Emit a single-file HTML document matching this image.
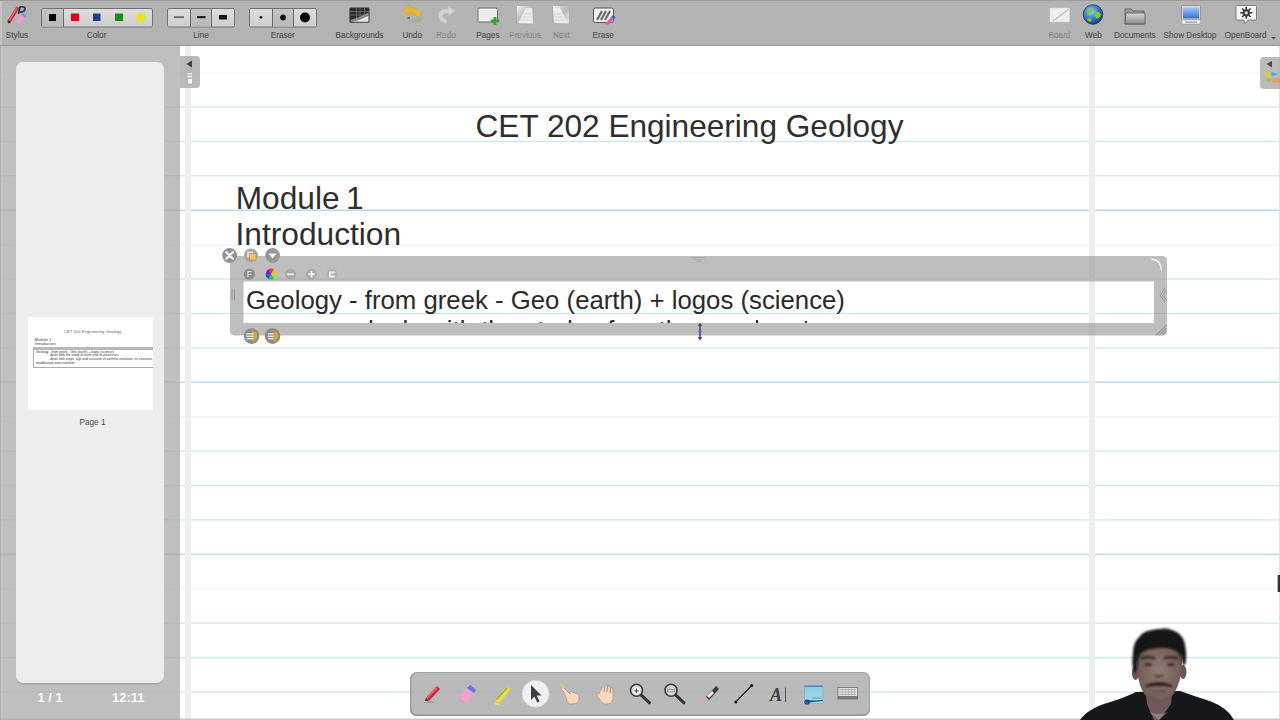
<!DOCTYPE html>
<html><head><meta charset="utf-8">
<style>
html,body{margin:0;padding:0;}
body{width:1280px;height:720px;overflow:hidden;position:relative;background:#fff;font-family:"Liberation Sans",sans-serif;}
.abs{position:absolute;}
#toolbar{left:0;top:0;width:1280px;height:44px;background:#b3b3b3;border-top:1px solid #9d9d9d;border-bottom:1px solid #9a9a9a;box-shadow:inset 0 -1px 0 #adadad;}
.lbl{position:absolute;top:30px;font-size:8.2px;line-height:10px;color:#4a4a4a;-webkit-text-stroke:0.1px #5a5a5a;white-space:nowrap;transform:translateX(-50%);}
.lbl.dis{color:#989898;}
.t1{font-size:32px;line-height:36px;color:#2e2e2e;white-space:nowrap;}

</style></head><body>
<svg class="abs" style="left:0;top:0" width="1280" height="720">
<g fill="#c8e2ee"><rect x="0" y="106.35" width="1280" height="1.3" fill="#cce7f0"/><rect x="0" y="140.76" width="1280" height="1.3" fill="#cce7f0"/><rect x="0" y="175.17" width="1280" height="1.3" fill="#cce7f0"/><rect x="0" y="209.48" width="1280" height="1.5" fill="#bad8ee"/><rect x="0" y="244.04" width="1280" height="1.2" fill="#eff2f5"/><rect x="0" y="278.40" width="1280" height="1.3" fill="#cce7f0"/><rect x="0" y="312.81" width="1280" height="1.3" fill="#cce7f0"/><rect x="0" y="347.22" width="1280" height="1.3" fill="#cce7f0"/><rect x="0" y="381.53" width="1280" height="1.5" fill="#bad8ee"/><rect x="0" y="416.09" width="1280" height="1.2" fill="#eff2f5"/><rect x="0" y="450.45" width="1280" height="1.3" fill="#cce7f0"/><rect x="0" y="484.86" width="1280" height="1.3" fill="#cce7f0"/><rect x="0" y="519.27" width="1280" height="1.3" fill="#cce7f0"/><rect x="0" y="553.58" width="1280" height="1.5" fill="#bad8ee"/><rect x="0" y="588.14" width="1280" height="1.2" fill="#eff2f5"/><rect x="0" y="622.50" width="1280" height="1.3" fill="#cce7f0"/><rect x="0" y="656.91" width="1280" height="1.3" fill="#cce7f0"/><rect x="0" y="691.32" width="1280" height="1.3" fill="#cce7f0"/></g>
<rect x="0" y="72.4" width="1280" height="1.3" fill="#f3f3f3"/>
<rect x="185" y="46" width="6" height="674" fill="#efefef"/>
<rect x="1089" y="46" width="6" height="674" fill="#eeeeee"/>
<rect x="0" y="718.5" width="1280" height="1.5" fill="#c8c8c8"/>
<rect x="1279" y="46" width="1" height="673" fill="#e2e2e2"/>
<defs><linearGradient id="edgem" x1="0" y1="0" x2="1" y2="0"><stop offset="0" stop-color="#bbb" stop-opacity="0"/><stop offset="0.5" stop-color="#444"/><stop offset="1" stop-color="#222"/></linearGradient></defs><rect x="1276.5" y="575" width="3.5" height="17" fill="url(#edgem)"/>
</svg>
<div id="toolbar" class="abs"></div>
<svg class="abs" style="left:0;top:0" width="1280" height="46">
<defs>
 <linearGradient id="gbtn" x1="0" y1="0" x2="0" y2="1"><stop offset="0" stop-color="#dedede"/><stop offset="1" stop-color="#cdcdcd"/></linearGradient>
 <linearGradient id="gsel" x1="0" y1="0" x2="0" y2="1"><stop offset="0" stop-color="#c4c4c4"/><stop offset="1" stop-color="#b9b9b9"/></linearGradient>
 <linearGradient id="gscr" x1="0" y1="0" x2="0" y2="1"><stop offset="0" stop-color="#9cc8f5"/><stop offset="1" stop-color="#3d6fd0"/></linearGradient>
 <radialGradient id="gglobe" cx="0.4" cy="0.35" r="0.7"><stop offset="0" stop-color="#a8d8f0"/><stop offset="0.5" stop-color="#3b7fc8"/><stop offset="1" stop-color="#173a7a"/></radialGradient>
 <linearGradient id="gpage" x1="0" y1="0" x2="1" y2="1"><stop offset="0" stop-color="#f4f4f4"/><stop offset="0.5" stop-color="#b8b8b8"/><stop offset="1" stop-color="#eeeeee"/></linearGradient>
 <linearGradient id="gfold" x1="0" y1="0" x2="0" y2="1"><stop offset="0" stop-color="#d8d8d8"/><stop offset="1" stop-color="#8a8a8a"/></linearGradient>
</defs>
<!-- left edge line -->
<rect x="0" y="1" width="2" height="44" fill="#c3c3c3"/>
<!-- Stylus icon -->
<g>
 <path d="M8.5 23.5 L7.5 21 L16.5 6.5 L19.5 8 L10.5 22.5 Z" fill="#c62c3a"/>
 <path d="M8.6 20.5 L16.8 7.3 L17.8 7.9 L9.6 21.1 Z" fill="#f08a94" opacity="0.7"/>
 <path d="M8.5 23.5 L7.5 21 L9.5 20.5 L10.5 22.5 Z" fill="#2a2a2a"/>
 <path d="M18.5 14 L20 6.5" stroke="#26346a" stroke-width="1.8" fill="none"/>
 <path d="M20 7 Q25.5 6 25 9.5 Q24 12.5 19.5 12" stroke="#26346a" stroke-width="1.7" fill="none"/>
 <path d="M16 21.5 L21.5 15 L25 17.5 L19.5 24 Z" fill="#e8a0d4"/>
 <path d="M21.5 15 L23 13.5 L26.5 16 L25 17.5 Z" fill="#7090d8"/>
</g>
<!-- Color group -->
<rect x="41.5" y="8.5" width="111" height="18.5" rx="1.5" fill="url(#gbtn)" stroke="#727272" stroke-width="1"/>
<rect x="42" y="9" width="21" height="17.5" fill="url(#gsel)"/>
<line x1="63.5" y1="8.5" x2="63.5" y2="27" stroke="#6a6a6a" stroke-width="1"/>
<rect x="49" y="14" width="7" height="7" fill="#000"/>
<rect x="71" y="13.5" width="8" height="7.5" fill="#e0001a"/>
<rect x="93" y="13.5" width="7.5" height="7.5" fill="#1a3f8c"/>
<rect x="115" y="13.5" width="8" height="7.5" fill="#1a8c1a"/>
<rect x="137" y="13.5" width="8" height="7.5" fill="#f0e21a"/>
<!-- Line group -->
<rect x="167.5" y="8.5" width="67" height="18.5" rx="1.5" fill="url(#gbtn)" stroke="#727272" stroke-width="1"/>
<rect x="190.5" y="9" width="21" height="17.5" fill="url(#gsel)"/>
<line x1="190.5" y1="8.5" x2="190.5" y2="27" stroke="#6a6a6a"/>
<line x1="211.5" y1="8.5" x2="211.5" y2="27" stroke="#6a6a6a"/>
<rect x="174" y="16.5" width="10" height="1.2" fill="#333"/>
<rect x="197" y="16" width="8.5" height="2.2" fill="#222"/>
<rect x="219" y="15" width="8" height="4.5" fill="#111"/>
<!-- Eraser group -->
<rect x="249.5" y="8.5" width="67" height="18.5" rx="1.5" fill="url(#gbtn)" stroke="#727272" stroke-width="1"/>
<rect x="272.5" y="9" width="21" height="17.5" fill="url(#gsel)"/>
<line x1="272.5" y1="8.5" x2="272.5" y2="27" stroke="#6a6a6a"/>
<line x1="293.5" y1="8.5" x2="293.5" y2="27" stroke="#6a6a6a"/>
<circle cx="261" cy="17.3" r="1.4" fill="#111"/>
<circle cx="283" cy="17.5" r="2.9" fill="#111"/>
<circle cx="305" cy="17.5" r="5" fill="#050505"/>
<!-- Backgrounds -->
<rect x="349.7" y="7.8" width="19.5" height="14.6" rx="1" fill="#2c2c2c" stroke="#4a4a4a" stroke-width="0.6"/>
<g stroke="#6e6e6e" stroke-width="0.8">
 <line x1="356.5" y1="8" x2="356.5" y2="21"/><line x1="360" y1="8" x2="360" y2="21"/><line x1="364.5" y1="8" x2="364.5" y2="17"/>
 <line x1="350" y1="11.5" x2="369" y2="11.5"/><line x1="350" y1="15" x2="369" y2="15"/>
</g>
<path d="M350.5 20 Q360 17 368.5 12.5 L368.5 17 Q360 20.5 350.5 21.5 Z" fill="#8a8a8a"/>
<path d="M351 21.8 Q360 20.5 368.5 16 L368.5 21.8 Z" fill="#e8e8e8"/>
<!-- Undo -->
<path d="M402.5 10.5 L409.5 4.5 L409.5 8 Q418 7.5 420.5 12.5 L421.5 16.5 L416.5 17 Q415.5 13 409.5 13 L409.5 16.5 Z" fill="#e9b52e" stroke="#c8a040" stroke-width="0.5"/>
<path d="M416.5 16 Q421.5 16 421.5 19.5 Q420.5 23.5 413 23.2 Q409 22.5 408.5 20 L412 19.8 Q416 20.3 416.5 17.5 Z" fill="#a9ad98"/>
<path d="M407.5 17 L410 17 L410 19 L407.5 19 Z" fill="#555" opacity="0.7"/>
<!-- Redo disabled -->
<path d="M455 11 L448.5 6 L448.5 9 Q440 8.5 438.5 14 Q438 20 444 22.5 L447 23 L446 19.5 Q442 18.5 442.5 15 Q443.5 12.5 448.5 13 L448.5 16 Z" fill="#d2d2d2" stroke="#c8c8c8" stroke-width="0.5"/>
<!-- Pages -->
<rect x="478" y="8" width="19.5" height="14" rx="1.5" fill="#ececec" stroke="#6a6a6a" stroke-width="1"/>
<path d="M490.8 19.5 h2.8 v-2.6 h2.8 v2.6 h2.8 v2.8 h-2.8 v2.6 h-2.8 v-2.6 h-2.8 z" fill="#2fa52f"/>
<!-- Previous -->
<rect x="516.5" y="5.5" width="17" height="18.5" rx="1" fill="url(#gpage)" stroke="#a8a8a8" stroke-width="0.8"/>
<path d="M518 23 L526 8 L532 8 L532 23 Z" fill="#f2f2f2" opacity="0.85"/>
<g stroke="#cfcfcf" stroke-width="0.7"><line x1="524" y1="14" x2="532" y2="14"/><line x1="522" y1="17" x2="532" y2="17"/><line x1="520" y1="20" x2="532" y2="20"/></g>
<!-- Next -->
<rect x="552.5" y="5.5" width="17" height="18.5" rx="1" fill="url(#gpage)" stroke="#a8a8a8" stroke-width="0.8"/>
<path d="M568 23 L560 8 L554 8 L554 23 Z" fill="#f2f2f2" opacity="0.85"/>
<g stroke="#cfcfcf" stroke-width="0.7"><line x1="554" y1="14" x2="562" y2="14"/><line x1="554" y1="17" x2="564" y2="17"/><line x1="554" y1="20" x2="566" y2="20"/></g>
<!-- Erase -->
<rect x="593.5" y="8" width="20" height="14.5" rx="2" fill="#f0f0f0" stroke="#555" stroke-width="1"/>
<g stroke="#6a6a6a" stroke-width="2.2"><line x1="597" y1="20" x2="602" y2="11"/><line x1="601" y1="20" x2="606" y2="11"/><line x1="605" y1="20" x2="610" y2="11"/></g>
<path d="M605 24 L611 17 L614 19 L608 25 Z" fill="#e05ab4"/>
<path d="M611 17 L613 15 L615.5 17 L614 19 Z" fill="#3f5fbf"/>
<!-- Board (disabled) -->
<rect x="1050" y="8" width="19.5" height="14" fill="#eeeeee" stroke="#d6d6d6" stroke-width="0.6"/>
<line x1="1053" y1="21" x2="1069" y2="9" stroke="#c2c2c2" stroke-width="1.5"/>
<!-- Web globe -->
<circle cx="1093" cy="14.5" r="9.8" fill="url(#gglobe)" stroke="#2a3a4a" stroke-width="0.8"/>
<path d="M1087 11 Q1090 8 1093 10 Q1092 14 1088 15 Z M1095 12 Q1100 11 1101 15 Q1099 20 1096 18 Q1094 15 1095 12 Z M1087 19 Q1090 17 1092 20 Q1091 23 1088 21 Z" fill="#7ec83a"/>
<!-- Documents folder -->
<path d="M1125 9 L1131 9 L1133 11 L1144 11 L1144 24 L1125 24 Z" fill="#9a9a9a" stroke="#5a5a5a" stroke-width="0.8"/>
<path d="M1126 13 L1145 13 L1145 24 L1125 24 Z" fill="url(#gfold)" stroke="#555" stroke-width="0.8"/>
<!-- Show Desktop -->
<rect x="1181.5" y="5.5" width="19" height="14.5" rx="1" fill="#d8d8d8" stroke="#8a8a8a" stroke-width="0.8"/>
<rect x="1183" y="7.5" width="16" height="11" fill="url(#gscr)"/>
<path d="M1181.5 20 L1200.5 20 L1200 24 L1182 24 Z" fill="#f4f4f4" stroke="#9a9a9a" stroke-width="0.6"/>
<rect x="1185" y="21.5" width="12" height="1.5" fill="#aaaaaa"/>
<!-- OpenBoard -->
<path d="M1237 5.5 L1255.5 5.5 Q1256.5 5.5 1256.5 6.5 L1256.5 19 Q1256.5 20 1255.5 20 L1248 20 L1245 23.5 L1244 20 L1237 20 Q1236 20 1236 19 L1236 6.5 Q1236 5.5 1237 5.5 Z" fill="#f6f6f6" stroke="#6a6a6a" stroke-width="0.8"/>
<g fill="#3a3a3a"><circle cx="1246.3" cy="12.8" r="3.6"/>
<rect x="1245.5" y="6.8" width="1.6" height="12"/><rect x="1240.3" y="12" width="12" height="1.6"/>
<rect x="1245.5" y="6.8" width="1.6" height="12" transform="rotate(45 1246.3 12.8)"/><rect x="1245.5" y="6.8" width="1.6" height="12" transform="rotate(-45 1246.3 12.8)"/></g>
<circle cx="1246.3" cy="12.8" r="1.6" fill="#ddd"/>
<path d="M1271 37 L1276 37 L1273.5 39.5 Z" fill="#555"/>
</svg>
<div class="lbl" style="left:17px;top:30.8px">Stylus</div>
<div class="lbl" style="left:96.6px;top:30.8px">Color</div>
<div class="lbl" style="left:201px;top:30.8px">Line</div>
<div class="lbl" style="left:282.8px;top:30.8px">Eraser</div>
<div class="lbl" style="left:359.5px;top:30.8px">Backgrounds</div>
<div class="lbl" style="left:412.2px;top:30.8px">Undo</div>
<div class="lbl dis" style="left:446px;top:30.8px">Redo</div>
<div class="lbl" style="left:487.9px;top:30.8px">Pages</div>
<div class="lbl dis" style="left:525.1px;top:30.8px">Previous</div>
<div class="lbl dis" style="left:561.4px;top:30.8px">Next</div>
<div class="lbl" style="left:603.2px;top:30.8px">Erase</div>
<div class="lbl dis" style="left:1059.5px;top:30.8px">Board</div>
<div class="lbl" style="left:1093.4px;top:30.8px">Web</div>
<div class="lbl" style="left:1134.8px;top:30.8px">Documents</div>
<div class="lbl" style="left:1190px;top:30.8px">Show Desktop</div>
<div class="lbl" style="left:1245.7px;top:30.8px">OpenBoard</div>

<div class="abs" style="left:0;top:46px;width:180px;height:674px;background:rgba(168,168,168,0.74);"></div>
<div class="abs" style="left:0;top:46px;width:1px;height:674px;background:rgba(0,0,0,0.07);"></div><div class="abs" style="left:1px;top:46px;width:2px;height:674px;background:rgba(255,255,255,0.12);"></div>
<div class="abs" style="left:16px;top:62px;width:148px;height:621px;background:#ededed;border-radius:7px;box-shadow:0 1.5px 0.5px #a4a4a4;"></div>
<div class="abs" style="left:28px;top:317px;width:124.5px;height:93px;background:#fff;overflow:hidden;font-family:'Liberation Sans',sans-serif;">
 <div style="position:absolute;left:36px;top:11.8px;font-size:4.15px;line-height:5px;color:#666;white-space:nowrap;letter-spacing:0.05px">CET 202 Engineering Geology</div>
 <div style="position:absolute;left:6.5px;top:20.8px;font-size:4.1px;line-height:4px;color:#444;white-space:nowrap;">Module 1<br>Introduction</div>
 <div style="position:absolute;left:5px;top:30px;width:125px;height:2.8px;background:#b8b8b8;"></div>
 <div style="position:absolute;left:5px;top:32.8px;width:125px;height:18px;box-sizing:border-box;border:1px solid #a9a9a9;border-top:none;border-right:none;"></div>
 <div style="position:absolute;left:8px;top:33.5px;font-size:3.35px;line-height:3.8px;color:#333;white-space:nowrap;">Geology - from greek - Geo (earth) + logos (science)<br><span style="padding-left:14px">deals with the study of earth and its processes</span><br><span style="padding-left:14px">deals with origin, age and structure of earth/its evolution, its structure,</span><br>modification and evolution</div>
</div>
<div class="abs" style="left:1.5px;top:418px;width:182px;text-align:center;font-size:8.2px;line-height:10px;color:#4a4a4a;">Page 1</div>
<div class="abs" style="left:37.5px;top:689.5px;font-size:13px;line-height:15px;font-weight:bold;color:#fafafa;">1 / 1</div>
<div class="abs" style="left:112px;top:689.5px;font-size:13px;line-height:15px;font-weight:bold;color:#fafafa;">12:11</div>
<!-- left collapse tab -->
<div class="abs" style="left:180px;top:56px;width:20px;height:32px;background:rgba(165,165,165,0.78);border-radius:0 4px 4px 0;"></div>
<svg class="abs" style="left:180px;top:56px" width="20" height="32">
 <path d="M6.5 8 L12 4.5 L12 11.5 Z" fill="#3d3d3d"/>
 <rect x="7.5" y="17" width="4.5" height="1.5" fill="#f4f4f4"/>
 <rect x="7.5" y="19.8" width="4.5" height="1.5" fill="#f4f4f4"/>
 <rect x="8" y="23" width="4" height="4.5" fill="#fafafa"/>
</svg>
<!-- right collapse tab -->
<div class="abs" style="left:1260px;top:56.5px;width:20px;height:32px;background:rgba(168,168,168,0.78);border-radius:4px 0 0 4px;"></div>
<svg class="abs" style="left:1260px;top:56px" width="20" height="32">
 <path d="M6.5 8 L12 5 L12 11.5 Z" fill="#4a4a4a"/>
 <rect x="5" y="16" width="5.5" height="4.5" fill="#e2cc3a"/>
 <path d="M11.5 16 L17.5 18.2 L11.5 20.5 Z" fill="#3ab0e0"/>
 <path d="M5 24 L10.5 22 L10.5 26.5 Z" fill="#8ac84a"/>
 <rect x="11.5" y="22" width="8.5" height="4.5" fill="#e89a6a"/>
</svg>

<div class="abs t1" style="left:475.5px;top:108.4px;font-size:31.6px;">CET 202 Engineering Geology</div>
<div class="abs t1" style="left:235.7px;top:180px;font-size:31.7px;word-spacing:-2.5px;">Module 1</div>
<div class="abs t1" style="left:235.5px;top:216px;font-size:31.7px;">Introduction</div>
<!-- text widget frame -->
<svg class="abs" style="left:228px;top:245px" width="945" height="100">
 <path fill-rule="evenodd" fill="rgba(150,150,150,0.62)" d="M7 11 H934 Q939 11 939 16 V85.5 Q939 90.5 934 90.5 H7 Q2 90.5 2 85.5 V16 Q2 11 7 11 Z M15.5 36.5 V78 H926 V36.5 Z"/>
 <!-- close -->
 <circle cx="1.6" cy="10.4" r="7" fill="#9a9a9a" transform="translate(0,0)"/>
</svg>
<svg class="abs" style="left:215px;top:245px" width="90" height="100">
 <circle cx="14.6" cy="10.4" r="7.4" fill="#929292"/>
 <path d="M11.3 7.1 L17.9 13.7 M17.9 7.1 L11.3 13.7" stroke="#f4f4f4" stroke-width="2.3" stroke-linecap="round"/>
 <circle cx="36" cy="10.4" r="7" fill="#a8a8a8"/>
 <rect x="31.5" y="6" width="7" height="7" fill="#e0e0e0" stroke="#8a8a8a" stroke-width="0.6"/>
 <rect x="34.5" y="8.5" width="6.5" height="6.5" fill="#f2c060" stroke="#c08a30" stroke-width="0.6"/>
 <circle cx="57.6" cy="10.4" r="7.4" fill="#979797"/>
 <path d="M53.5 8.5 L61.7 8.5 L57.6 13.5 Z" fill="#f4f4f4"/>
 <!-- F, color, minus, plus, fit -->
 <circle cx="34.4" cy="29.2" r="5.6" fill="#8e8e8e"/>
 <text x="34.4" y="32.4" font-size="8.5" font-family="Liberation Sans" fill="#f0f0f0" text-anchor="middle">F</text>
</svg>
<svg class="abs" style="left:264px;top:268px" width="80" height="14">
 <defs><radialGradient id="rainb" cx="0.5" cy="0.5" r="0.5"><stop offset="0" stop-color="#fff"/><stop offset="1" stop-color="#fff" stop-opacity="0"/></radialGradient></defs>
 <g transform="translate(7.2,6.2)">
  <path d="M0 0 L5.6 0 A5.6 5.6 0 0 1 2.8 4.85 Z" fill="#9ee040"/>
  <path d="M0 0 L2.8 4.85 A5.6 5.6 0 0 1 -2.8 4.85 Z" fill="#30c070"/>
  <path d="M0 0 L-2.8 4.85 A5.6 5.6 0 0 1 -5.6 0 Z" fill="#2050d8"/>
  <path d="M0 0 L-5.6 0 A5.6 5.6 0 0 1 -2.8 -4.85 Z" fill="#6a20c8"/>
  <path d="M0 0 L-2.8 -4.85 A5.6 5.6 0 0 1 2.8 -4.85 Z" fill="#e83050"/>
  <path d="M0 0 L2.8 -4.85 A5.6 5.6 0 0 1 5.6 0 Z" fill="#f0c028"/>
 </g>
 <circle cx="26.6" cy="6.2" r="5.5" fill="#a9a9a9"/>
 <rect x="23.3" y="5.3" width="6.6" height="1.9" fill="#ededed"/>
 <circle cx="47.4" cy="6.2" r="5.5" fill="#a9a9a9"/>
 <rect x="44.1" y="5.3" width="6.6" height="1.9" fill="#ededed"/><rect x="46.45" y="2.9" width="1.9" height="6.6" fill="#ededed"/>
 <circle cx="68" cy="6.2" r="5.5" fill="#b0b0b0"/>
 <path d="M65 3.5 h6 v2 h-4 v2 h4 v2 h-6 z" fill="#ececec"/>
</svg>
<!-- text content -->
<div class="abs" style="left:243px;top:281px;width:911px;height:42px;overflow:hidden;">
  <div style="position:absolute;left:3px;top:3.5px;font-size:25.76px;line-height:30px;color:#2a2a2a;white-space:nowrap;">Geology - from greek - Geo (earth) + logos (science)<br><span style="padding-left:113.5px">deals with the study of earth</span></div>
</div>
<div class="abs" style="left:755.5px;top:320px;width:2.2px;height:3px;background:#2a2a2a;"></div><div class="abs" style="left:804.5px;top:321px;width:2.2px;height:2px;background:#3a3a3a;"></div>
<!-- left handle -->
<svg class="abs" style="left:229px;top:287px" width="12" height="16"><g stroke="#8a8a8a" stroke-width="0.8"><line x1="3" y1="2" x2="3" y2="13"/><line x1="5.5" y1="2" x2="5.5" y2="13"/></g></svg>
<!-- right handles -->
<svg class="abs" style="left:1148px;top:255px" width="20" height="82">
 <path d="M3.5 4.3 Q12.5 4.2 13.3 15.4" stroke="#f0f0f0" stroke-width="1.4" fill="none"/>
 <g stroke="#858585" stroke-width="0.8" fill="none"><path d="M17.2 32.5 L12.2 40.5 L17.2 47"/><path d="M18.6 35 L15 40.5 L18.6 45"/></g>
 <g stroke="#707070" stroke-width="0.8"><line x1="8" y1="80.5" x2="18.5" y2="70"/><line x1="11" y1="80.5" x2="18.5" y2="73"/><line x1="14" y1="80.5" x2="18.5" y2="76"/></g>
</svg>
<!-- top middle grip -->
<svg class="abs" style="left:690px;top:255px" width="20" height="10"><g stroke="#a0a0a0" stroke-width="0.6"><line x1="2.5" y1="2.5" x2="15.5" y2="2.5"/><line x1="4.5" y1="4.5" x2="13.5" y2="4.5"/><line x1="6.5" y1="6.5" x2="11.5" y2="6.5"/></g></svg>
<!-- bottom buttons -->
<svg class="abs" style="left:240px;top:325px" width="45" height="22">
 <defs><radialGradient id="orb" cx="0.65" cy="0.5" r="0.5"><stop offset="0" stop-color="#e8b030"/><stop offset="1" stop-color="#c89a40"/></radialGradient></defs>
 <circle cx="11.6" cy="11.1" r="7.8" fill="#8c8c8c"/>
 <path d="M12 5 A6.2 6.2 0 0 1 12 17.2 Z" fill="url(#orb)"/>
 <g fill="#f2f2f2"><rect x="6.5" y="8.2" width="7" height="1.3"/><rect x="6.5" y="10.6" width="7" height="1.3"/><rect x="6.5" y="13" width="7" height="1.3"/></g>
 <circle cx="32.5" cy="11.1" r="7.8" fill="#8c8c8c"/>
 <path d="M33 5 A6.2 6.2 0 0 1 33 17.2 Z" fill="url(#orb)"/>
 <g fill="#f2f2f2"><rect x="28" y="8.2" width="5.5" height="1.3"/><rect x="28" y="10.6" width="5.5" height="1.3"/><rect x="28" y="13" width="5.5" height="1.3"/></g>
</svg>
<!-- resize cursor -->
<svg class="abs" style="left:693px;top:320px" width="14" height="24">
 <path d="M7 2.5 L4.8 6 L6.2 6 L6.2 17 L4.8 17 L7 20.8 L9.2 17 L7.8 17 L7.8 6 L9.2 6 Z" fill="#5c3c86"/>
 <rect x="4.5" y="10.8" width="5" height="1" fill="#8a6ab0" opacity="0.8"/>
</svg>

<div class="abs" style="left:410px;top:672px;width:460px;height:44px;border-radius:7px;background:rgba(160,160,160,0.72);box-shadow:inset 0 0 0 1px rgba(135,135,135,0.45), inset 0 -1.5px 0 rgba(120,120,120,0.55), inset 1.5px 0 0 rgba(130,130,130,0.4);"></div>
<svg class="abs" style="left:410px;top:672px" width="460" height="44">
 <defs>
  <linearGradient id="gcap" x1="0" y1="0" x2="0" y2="1"><stop offset="0" stop-color="#88cce0"/><stop offset="1" stop-color="#a8dce8"/></linearGradient>
 </defs>
 <!-- pen -->
 <g transform="translate(22,22)">
  <path d="M-7 7 L-6 4 L5 -8 L8 -5 L-3 7 Z" fill="#c8283a"/>
  <path d="M-6 4 L4 -7 L5.5 -5.5 L-5 5.5 Z" fill="#ee6070"/>
  <path d="M-7 7 L-6 4 L-3 7 Z" fill="#444"/>
  <path d="M-9 9 L-3 6 L3 9 Z" fill="#8a8a8a" opacity="0.6"/>
 </g>
 <!-- eraser -->
 <g transform="translate(57,22)">
  <path d="M-8 4 L0 -6 L7 -1 L-1 9 Z" fill="#f0a0d0"/>
  <path d="M0 -6 L3 -9 L9 -4 L7 -1 Z" fill="#5a7ad8"/>
  <path d="M-8 4 L-1 9 L-2 10 L-9 5 Z" fill="#e690c0" opacity="0.7"/>
 </g>
 <!-- highlighter -->
 <g transform="translate(92,22)">
  <path d="M-7 6 L5 -8 L9 -5 L-3 9 Z" fill="#e8e040"/>
  <path d="M-6 5 L5 -7 L6 -6 L-5 6 Z" fill="#8a8a2a" opacity="0.7"/>
  <path d="M-8 8 L-3 9 L-2 11 L-7 11 Z" fill="#f0e060" opacity="0.8"/>
 </g>
 <!-- pointer selected -->
 <circle cx="125.6" cy="21.8" r="13.5" fill="#f0f0f0" stroke="#d6d6d6" stroke-width="1"/>
 <path d="M121 13 L121 28 L124.3 24.6 L127.4 30.5 L129.6 29.4 L126.6 23.6 L131.5 23.4 Z" fill="#3a3a48"/>
 <!-- pointing hand -->
 <g transform="translate(161,22)">
  <path d="M-8 -7 L-1 0 L-1 -2 Q1 -3 2 -1 Q4 -2 5 0 Q7 -1 8 1 L8 6 Q7 10 2 10 L-2 10 Q-4 8 -5 3 L-7 -2 L-10 -5 Q-10 -8 -8 -7 Z" fill="#f4d8c0" stroke="#b08870" stroke-width="0.6"/>
  <path d="M-11 -10 L-7 -6" stroke="#c0e070" stroke-width="1.5"/>
 </g>
 <!-- open hand -->
 <g transform="translate(196,22)">
  <path d="M-7 0 L-4 -7 Q-3 -8 -2 -7 L-2 -2 L-1 -9 Q0 -10 1 -9 L1 -2 L2 -8 Q3 -9 4 -8 L4 -1 L5 -6 Q6 -7 7 -6 L7 5 Q6 10 1 10 L-2 10 Q-5 8 -8 3 L-10 0 Q-9 -1 -7 0 Z" fill="#f4d8c0" stroke="#b08870" stroke-width="0.6"/>
 </g>
 <!-- zoom in -->
 <g transform="translate(226.5,18.3)">
  <line x1="4" y1="4" x2="13" y2="12.5" stroke="#333" stroke-width="3" stroke-linecap="round"/>
  <circle cx="0" cy="0" r="6" fill="#d8d8d8" stroke="#3a3a3a" stroke-width="1.6"/>
  <circle cx="0" cy="0.5" r="3.2" fill="#f8f8f8"/>
  <path d="M-2.2 0.5 H2.2 M0 -1.7 V2.7" stroke="#555" stroke-width="1.2"/>
 </g>
 <!-- zoom out -->
 <g transform="translate(261,18.3)">
  <line x1="4" y1="4" x2="13" y2="12.5" stroke="#333" stroke-width="3" stroke-linecap="round"/>
  <circle cx="0" cy="0" r="6" fill="#d8d8d8" stroke="#3a3a3a" stroke-width="1.6"/>
  <rect x="-3.5" y="-1" width="7" height="2.5" fill="#f4f4f4" stroke="#555" stroke-width="0.6"/>
 </g>
 <!-- laser pointer -->
 <g transform="translate(299,22)">
  <path d="M-9 9 L2 -3" stroke="#e0a0c8" stroke-width="1.6"/>
  <path d="M-3 3 L7 -8 L10 -5 L0 6 Z" fill="#3a3a3a"/>
  <path d="M-2 2 L3 -3 L5 -1 L0 4 Z" fill="#f0f0f0"/>
  <path d="M4 -5 L6 -7" stroke="#3ad070" stroke-width="1"/>
 </g>
 <!-- line -->
 <line x1="325.8" y1="29.9" x2="341.7" y2="13.5" stroke="#222" stroke-width="1.3"/>
 <circle cx="325.8" cy="29.9" r="1.5" fill="#111"/><circle cx="341.7" cy="13.5" r="1.5" fill="#111"/>
 <!-- text A -->
 <text x="360" y="28.8" font-family="Liberation Serif" font-style="italic" font-weight="bold" font-size="18" fill="#404040">A</text>
 <rect x="375" y="15.5" width="1" height="14.5" fill="#555"/>
 <!-- capture -->
 <rect x="394.5" y="13.5" width="18.5" height="18" fill="url(#gcap)" stroke="#7aaac8" stroke-width="0.6"/>
 <rect x="394.5" y="13.5" width="18.5" height="1.5" fill="#5a8ab8"/>
 <path d="M396 28 L403 28.5 L413 28 L413 29 L403 30 L396 31 Z" fill="#2a4a90"/><rect x="402" y="25.5" width="10" height="1" fill="#4a6aa0" opacity="0.6"/>
 <circle cx="397" cy="30" r="2" fill="none" stroke="#1a3a80" stroke-width="1.2"/>
 <!-- keyboard -->
 <rect x="428" y="15.5" width="19.5" height="11.5" fill="#e6e6e6" stroke="#6a6a6a" stroke-width="0.8"/>
 <g fill="#9a9a9a"><rect x="429.5" y="17.3" width="16.5" height="0.8"/><rect x="429.5" y="19.6" width="16.5" height="0.8"/><rect x="429.5" y="21.9" width="16.5" height="0.8"/></g>
 <g fill="#b0b0b0"><rect x="432" y="16.5" width="0.6" height="7"/><rect x="435" y="16.5" width="0.6" height="7"/><rect x="438" y="16.5" width="0.6" height="7"/><rect x="441" y="16.5" width="0.6" height="7"/><rect x="444" y="16.5" width="0.6" height="7"/></g>
 <rect x="428" y="24" width="19.5" height="3" fill="#7a7a7a"/>
</svg>

<svg class="abs" style="left:1070px;top:620px" width="180" height="100">
 <defs>
  <radialGradient id="face" cx="0.5" cy="0.5" r="0.6"><stop offset="0" stop-color="#927a72"/><stop offset="0.7" stop-color="#76615a"/><stop offset="1" stop-color="#5c4a45"/></radialGradient>
  <filter id="soft" x="-10%" y="-10%" width="120%" height="120%"><feGaussianBlur stdDeviation="0.9"/></filter>
  <filter id="soft2" x="-10%" y="-10%" width="120%" height="120%"><feGaussianBlur stdDeviation="0.5"/></filter>
 </defs>
 <g filter="url(#soft2)">
 <!-- shirt -->
 <path d="M10 100 Q18 88 42 81.5 Q56 77 66 72 L110 71 Q124 76 141 81.5 Q158 88 164 100 Z" fill="#15151b"/>
 <!-- neck -->
 <path d="M75 64 L103 64 L101 84 Q94 94 89 100 L84 100 Q80 92 77 84 Z" fill="#6e5a56"/>
 <path d="M79 92 L89 100 L98 92 Q89 96 79 92 Z" fill="#b0a8a8" opacity="0.5"/>
 <!-- ears -->
 <ellipse cx="65.5" cy="53" rx="3.5" ry="7" fill="#6a5652"/>
 <ellipse cx="113" cy="52" rx="3.5" ry="7" fill="#6a5652"/>
 <!-- face -->
 <path d="M66.5 40 Q67 22 90 21 Q112 22 112 40 Q112 62 103 75 Q96 82 89 82 Q81 82 75 75 Q67 64 66.5 40 Z" fill="url(#face)"/>
 </g>
 <g filter="url(#soft)">
 <!-- hair -->
 <path d="M64.5 54 Q61 44 63 33 Q63 22 70 16 Q74 11 82 10 Q88 8.5 95 9.5 Q103 9 108 13 Q114 17 115 25 Q117 33 115.5 44 L113 46 Q112 38 109 33 Q104 28.5 96 28 Q90 27.5 84 28.5 Q76 29 71 33 Q67.5 37 67.5 46 Q66.5 51 64.5 54 Z" fill="#171717"/>
 <path d="M86 10 Q96 6 104 11 Q98 10 92 12 Z" fill="#222"/>
 <!-- eyebrows -->
 <path d="M71 38.5 Q77 36 85 38.5" stroke="#2a1e1c" stroke-width="2.2" fill="none"/>
 <path d="M94 38.5 Q101 36 108 38.5" stroke="#2a1e1c" stroke-width="2.2" fill="none"/>
 <ellipse cx="78" cy="44.5" rx="4" ry="1.6" fill="#3a2e2c"/>
 <ellipse cx="101" cy="44.5" rx="4" ry="1.6" fill="#3a2e2c"/>
 <!-- nose -->
 <path d="M85 55 Q89 58 93 55" stroke="#4a3a36" stroke-width="2" fill="none"/>
 <!-- moustache -->
 <path d="M76 66 Q89 60 102 66 Q89 64 76 66 Z" fill="#2e2220" stroke="#2e2220" stroke-width="2.2"/>
 <path d="M82 71 Q89 72 96 71" stroke="#6a4e4c" stroke-width="1.6" fill="none"/>
 </g>
</svg>

</body></html>
